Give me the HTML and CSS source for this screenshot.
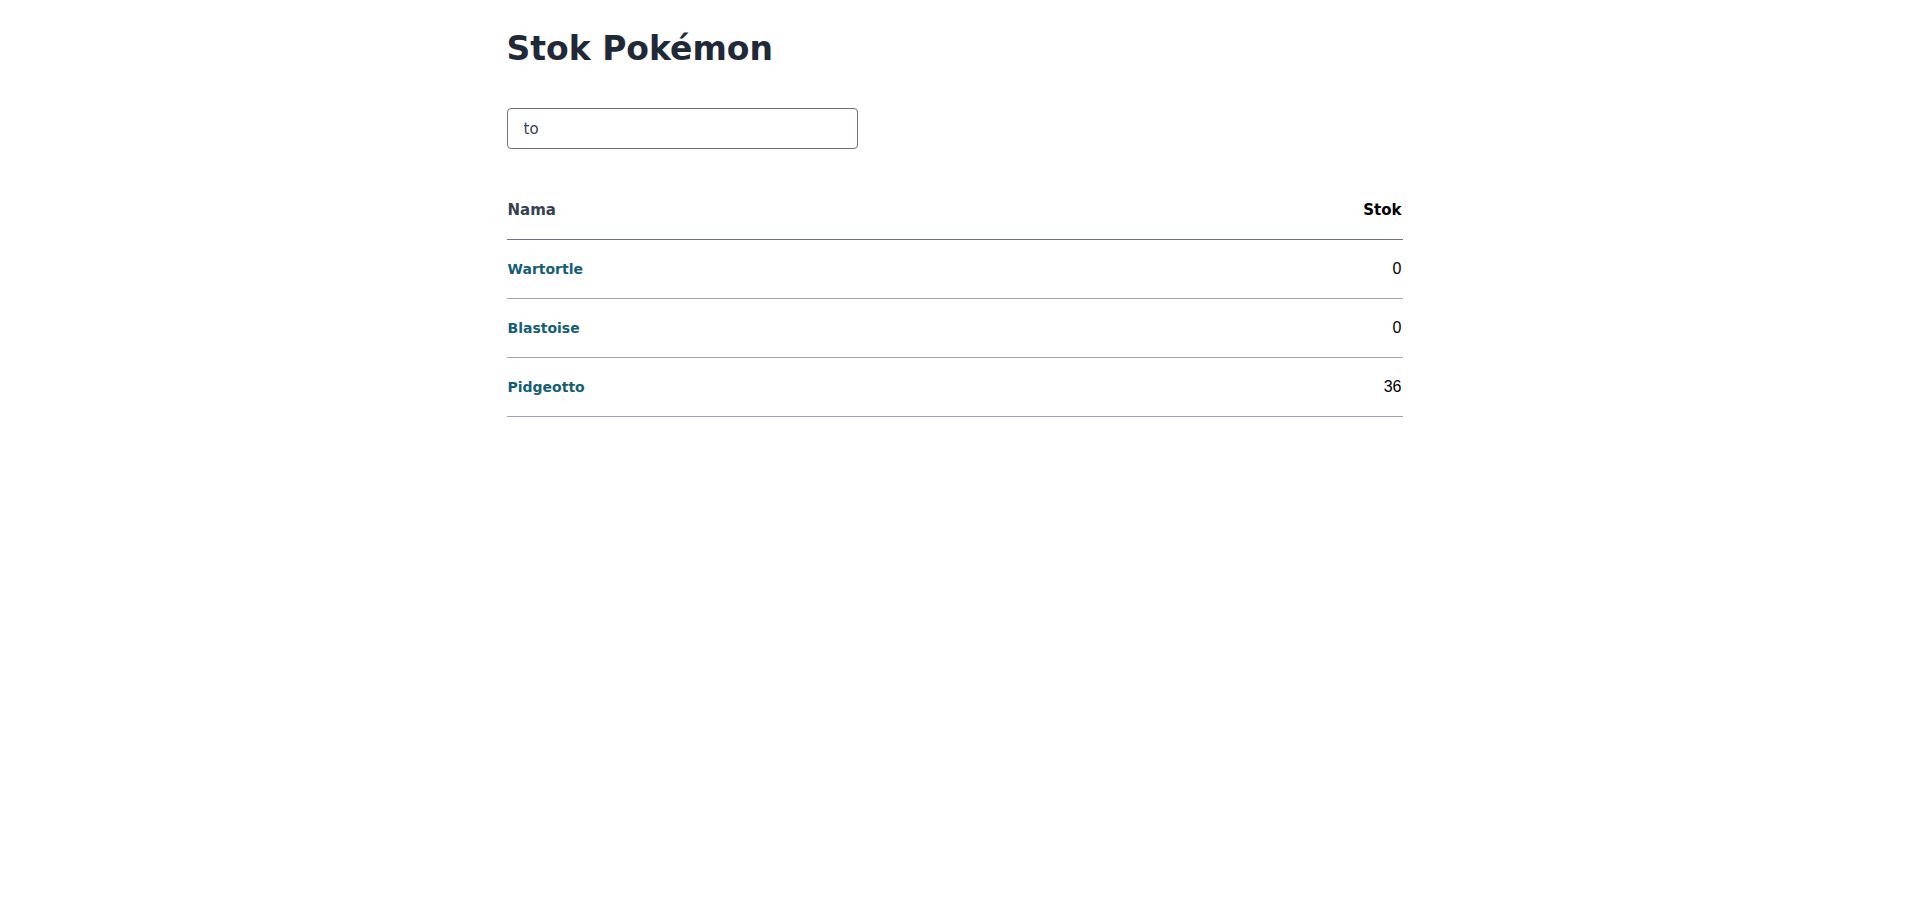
FILE: index.html
```html
<!DOCTYPE html>
<html lang="id">
<head>
<meta charset="utf-8">
<title>Stok Pokémon</title>
<link rel="stylesheet" href="styles.css">
</head>
<body>
<main class="container">
  <h1 class="title">Stok Pokémon</h1>
  <div class="search">
    <input class="search-input" type="text" value="to" aria-label="Cari" autofocus>
  </div>
  <table class="stock">
    <thead>
      <tr>
        <th class="col-name">Nama</th>
        <th class="col-stock">Stok</th>
      </tr>
    </thead>
    <tbody>
      <tr>
        <td class="name"><a href="#">Wartortle</a></td>
        <td class="qty">0</td>
      </tr>
      <tr>
        <td class="name"><a href="#">Blastoise</a></td>
        <td class="qty">0</td>
      </tr>
      <tr>
        <td class="name"><a href="#">Pidgeotto</a></td>
        <td class="qty">36</td>
      </tr>
    </tbody>
  </table>
</main>
</body>
</html>
```

FILE: styles.css
```css
* { box-sizing: border-box; }

html, body {
  margin: 0;
  padding: 0;
  background: #ffffff;
}

body {
  font-family: "DejaVu Sans", "Inter", sans-serif;
  color: #111111;
}

.container {
  max-width: 896px;
  margin: 0 auto;
  padding-top: 27px;
}

.title {
  margin: 0;
  font-size: 33px;
  line-height: 44px;
  font-weight: 700;
  color: #1f2937;
}

.search {
  margin-top: 37px;
}

.search-input {
  display: block;
  width: 351px;
  height: 41px;
  padding: 0 16px;
  border: 1px solid #6b7280;
  border-radius: 4px;
  font-family: "DejaVu Sans", "Inter", sans-serif;
  font-size: 15px;
  color: #374151;
  caret-color: #111111;
  background: #ffffff;
  outline: none;
}

.search-input:focus {
  outline: none;
  border-color: #6b7280;
}

.stock {
  width: 100%;
  margin-top: 33px;
  border-collapse: collapse;
}

.stock th {
  font-size: 15px;
  font-weight: 700;
  padding: 16px 1px 17px;
  line-height: 24px;
  border-bottom: 1px solid #6b7280;
}

.col-name {
  text-align: left;
  color: #374151;
}

.col-stock {
  text-align: right;
  color: #000000;
}

.stock td {
  padding: 17px 1px;
  height: 58px;
  line-height: 24px;
  font-size: 14px;
  border-bottom: 1px solid #a1a1b1;
}

.name a {
  color: #155e75;
  font-weight: 700;
  text-decoration: none;
}

.qty {
  text-align: right;
  font-family: "Liberation Sans", Arial, sans-serif;
  color: #000000;
}

.stock td.qty {
  font-size: 16px;
}
```
